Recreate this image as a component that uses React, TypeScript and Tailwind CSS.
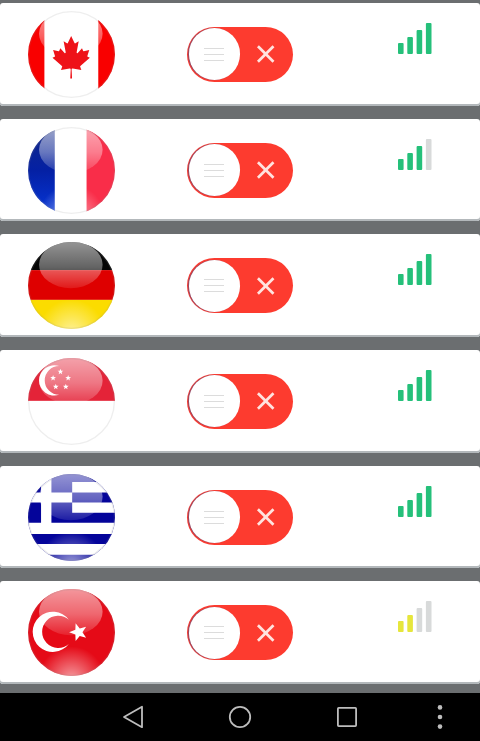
import { useState } from 'react';
import type { ReactNode } from 'react';

type Level = 'good' | 'weak';

interface Server {
  id: string;
  country: string;
  bars: number;
  level: Level;
  flag: ReactNode;
}

const MAPLE_LEAF =
  'm-90 2030 45-863a95 95 0 0 0-111-98l-859 151 116-320a65 65 0 0 0-20-73l-941-762 212-99a65 65 0 0 0 34-79l-186-572 542 115a65 65 0 0 0 73-38l105-247 423 454a65 65 0 0 0 111-57l-204-1052 327 189a65 65 0 0 0 91-27l332-652 332 652a65 65 0 0 0 91 27l327-189-204 1052a65 65 0 0 0 111 57l423-454 105 247a65 65 0 0 0 73 38l542-115-186 572a65 65 0 0 0 34 79l212 99-941 762a65 65 0 0 0-20 73l116 320-859-151a95 95 0 0 0-111 98l45 863z';

function starPoints(cx: number, cy: number, r: number, start: number) {
  return Array.from({ length: 10 }, (_, i) => {
    const radius = i % 2 === 0 ? r : r * 0.42;
    const angle = ((start + i * 36) * Math.PI) / 180;
    return `${(cx + radius * Math.cos(angle)).toFixed(1)},${(cy + radius * Math.sin(angle)).toFixed(1)}`;
  }).join(' ');
}

const servers: Server[] = [
  {
    id: 'ca',
    country: 'Canada',
    bars: 4,
    level: 'good',
    flag: (
      <>
        <rect width="260" height="260" fill="#ffffff" />
        <rect width="49" height="260" fill="#f90000" />
        <rect x="210" width="50" height="260" fill="#f90000" />
      </>
    ),
  },
  {
    id: 'fr',
    country: 'France',
    bars: 3,
    level: 'good',
    flag: (
      <>
        <rect width="260" height="260" fill="#ffffff" />
        <rect width="80" height="260" fill="url(#french-blue)" />
        <rect x="175" width="85" height="260" fill="#f92d49" />
      </>
    ),
  },
  {
    id: 'de',
    country: 'Germany',
    bars: 4,
    level: 'good',
    flag: (
      <>
        <rect width="260" height="84" fill="#050505" />
        <rect y="84" width="260" height="89" fill="#de0000" />
        <rect y="173" width="260" height="87" fill="#fbdc00" />
      </>
    ),
  },
  {
    id: 'sg',
    country: 'Singapore',
    bars: 4,
    level: 'good',
    flag: (
      <>
        <rect width="260" height="260" fill="#ffffff" />
        <rect width="260" height="128" fill="#e42338" />
      </>
    ),
  },
  {
    id: 'gr',
    country: 'Greece',
    bars: 4,
    level: 'good',
    flag: (
      <>
        <rect width="260" height="260" fill="#04049a" />
        <path
          fill="#ffffff"
          d="M132 24h128v31H132zM132 85h128v31H132zM0 146h260v33H0zM0 209h260v32H0zM39 0h31v146H39zM0 55h132v30H0z"
        />
      </>
    ),
  },
  {
    id: 'tr',
    country: 'Turkey',
    bars: 2,
    level: 'weak',
    flag: <rect width="260" height="260" fill="#e50a17" />,
  },
];

// Emblems that sit above the shine
const emblems: Record<string, ReactNode> = {
  ca: <path d={MAPLE_LEAF} transform="translate(129 138) scale(0.03 0.0315)" fill="#ee1218" />,
  sg: (
    <g fill="#ffffff">
      <path d="M93 24A45.4 45.4 0 1 0 93 110A43 43 0 0 1 93 24z" />
      <polygon points={starPoints(97, 41, 9, -90)} />
      <polygon points={starPoints(75, 60, 9, -90)} />
      <polygon points={starPoints(120, 60, 9, -90)} />
      <polygon points={starPoints(83, 86, 9, -90)} />
      <polygon points={starPoints(113, 86, 9, -90)} />
    </g>
  ),
  tr: (
    <g fill="#ffffff">
      <path d="M122 92A60 60 0 1 0 122 164A48 48 0 1 1 122 92z" />
      <polygon points={starPoints(151, 129, 28, 180)} />
    </g>
  ),
};

function SharedDefs() {
  return (
    <svg className="absolute size-0" aria-hidden="true">
      <defs>
        <clipPath id="disc">
          <circle cx="130" cy="130" r="130" />
        </clipPath>
        <linearGradient id="shine" x1="0" y1="0" x2="0" y2="1">
          <stop offset="0" stopColor="#fff" stopOpacity="0.58" />
          <stop offset="0.55" stopColor="#fff" stopOpacity="0.38" />
          <stop offset="1" stopColor="#fff" stopOpacity="0.1" />
        </linearGradient>
        <radialGradient id="glow" cx="0.5" cy="1.04" r="0.38">
          <stop offset="0" stopColor="#fff" stopOpacity="0.6" />
          <stop offset="1" stopColor="#fff" stopOpacity="0" />
        </radialGradient>
        <linearGradient id="french-blue" x1="0" y1="0" x2="0" y2="1">
          <stop offset="0" stopColor="#142a86" />
          <stop offset="0.5" stopColor="#0420a4" />
          <stop offset="1" stopColor="#0636d8" />
        </linearGradient>
      </defs>
    </svg>
  );
}

function Flag({ server }: { server: Server }) {
  return (
    <svg viewBox="0 0 260 260" className="size-[87px]" role="img" aria-label={server.country}>
      <g clipPath="url(#disc)">
        {server.flag}
        <rect width="260" height="260" fill="url(#glow)" />
        <ellipse cx="128" cy="68" rx="95" ry="70" fill="url(#shine)" />
        {emblems[server.id]}
      </g>
      <circle cx="130" cy="130" r="128" fill="none" stroke="#8c8c8c" strokeOpacity="0.15" strokeWidth="4" />
    </svg>
  );
}

function Toggle({ label }: { label: string }) {
  const [on, setOn] = useState(false);

  return (
    <label
      className={`relative flex h-[55px] w-[106px] cursor-pointer items-center justify-between rounded-full p-0.5 ${
        on ? 'flex-row-reverse bg-[#21bf73]' : 'bg-[#fd3b2f]'
      }`}
    >
      <input
        type="checkbox"
        className="sr-only"
        aria-label={label}
        checked={on}
        onChange={(e) => setOn(e.target.checked)}
      />
      <span className="flex size-[52px] flex-col items-center justify-center gap-[5px] rounded-full bg-white shadow-[-1px_0_1px_#8a4a68]">
        <span className="h-px w-5 bg-[#dcdcdc]" />
        <span className="h-px w-5 bg-[#dcdcdc]" />
        <span className="h-px w-5 bg-[#dcdcdc]" />
      </span>
      <svg viewBox="0 0 20 20" className="mx-4 size-5" fill="none" stroke="#ffe3df" strokeWidth="2.8">
        {on ? <path d="M2 11l5 5L18 4" /> : <path d="M2 2l16 16M18 2L2 18" />}
      </svg>
    </label>
  );
}

function Signal({ bars, level }: { bars: number; level: Level }) {
  const color = level === 'good' ? '#25c07a' : '#e6e63c';

  return (
    <svg viewBox="0 0 34 31" className="h-[31px] w-[34px]" role="img" aria-label={`Signal ${bars} of 4`}>
      {[11, 17, 24, 31].map((height, i) => (
        <rect
          key={height}
          x={i * 9.3}
          y={31 - height}
          width="5.6"
          height={height}
          rx="1"
          fill={i < bars ? color : '#d8dada'}
        />
      ))}
    </svg>
  );
}

function ServerRow({ server }: { server: Server }) {
  return (
    <li className="grid flex-1 grid-cols-3 items-center rounded-[3px] bg-white pr-12 pl-7 shadow-[inset_0_-2px_0_#b3b8bb]">
      <Flag server={server} />
      <div className="justify-self-center pl-5">
        <Toggle label={`Connect to ${server.country}`} />
      </div>
      <div className="mt-5 self-start justify-self-end">
        <Signal bars={server.bars} level={server.level} />
      </div>
    </li>
  );
}

function NavBar() {
  return (
    <nav className="grid h-12 grid-cols-[3fr_4fr_4fr_4fr_3fr] items-center bg-black text-[#bdbdbd]">
      <button type="button" aria-label="Back" className="col-start-2 flex justify-center">
        <svg viewBox="0 0 24 24" className="size-6" fill="none" stroke="currentColor" strokeWidth="1.8" strokeLinejoin="round">
          <path d="M21 1.8v20.4L3 12z" />
        </svg>
      </button>
      <button type="button" aria-label="Home" className="flex justify-center">
        <svg viewBox="0 0 24 24" className="size-6" fill="none" stroke="currentColor" strokeWidth="1.8">
          <circle cx="12" cy="12" r="10.2" />
        </svg>
      </button>
      <button type="button" aria-label="Recent apps" className="flex justify-center">
        <svg viewBox="0 0 24 24" className="size-6" fill="none" stroke="currentColor" strokeWidth="1.8">
          <rect x="2.9" y="2.9" width="18.2" height="18.2" rx="0.8" />
        </svg>
      </button>
      <button type="button" aria-label="More options" className="flex justify-center">
        <svg viewBox="0 0 24 24" className="size-6" fill="currentColor">
          <circle cx="12" cy="2.4" r="2.3" />
          <circle cx="12" cy="12" r="2.3" />
          <circle cx="12" cy="21.6" r="2.3" />
        </svg>
      </button>
    </nav>
  );
}

export default function App() {
  return (
    <div className="flex min-h-screen flex-col bg-[#6b6e70]">
      <SharedDefs />
      <ul className="flex flex-1 flex-col gap-[13px] pt-[3px] pb-[9px]">
        {servers.map((server) => (
          <ServerRow key={server.id} server={server} />
        ))}
      </ul>
      <NavBar />
    </div>
  );
}
